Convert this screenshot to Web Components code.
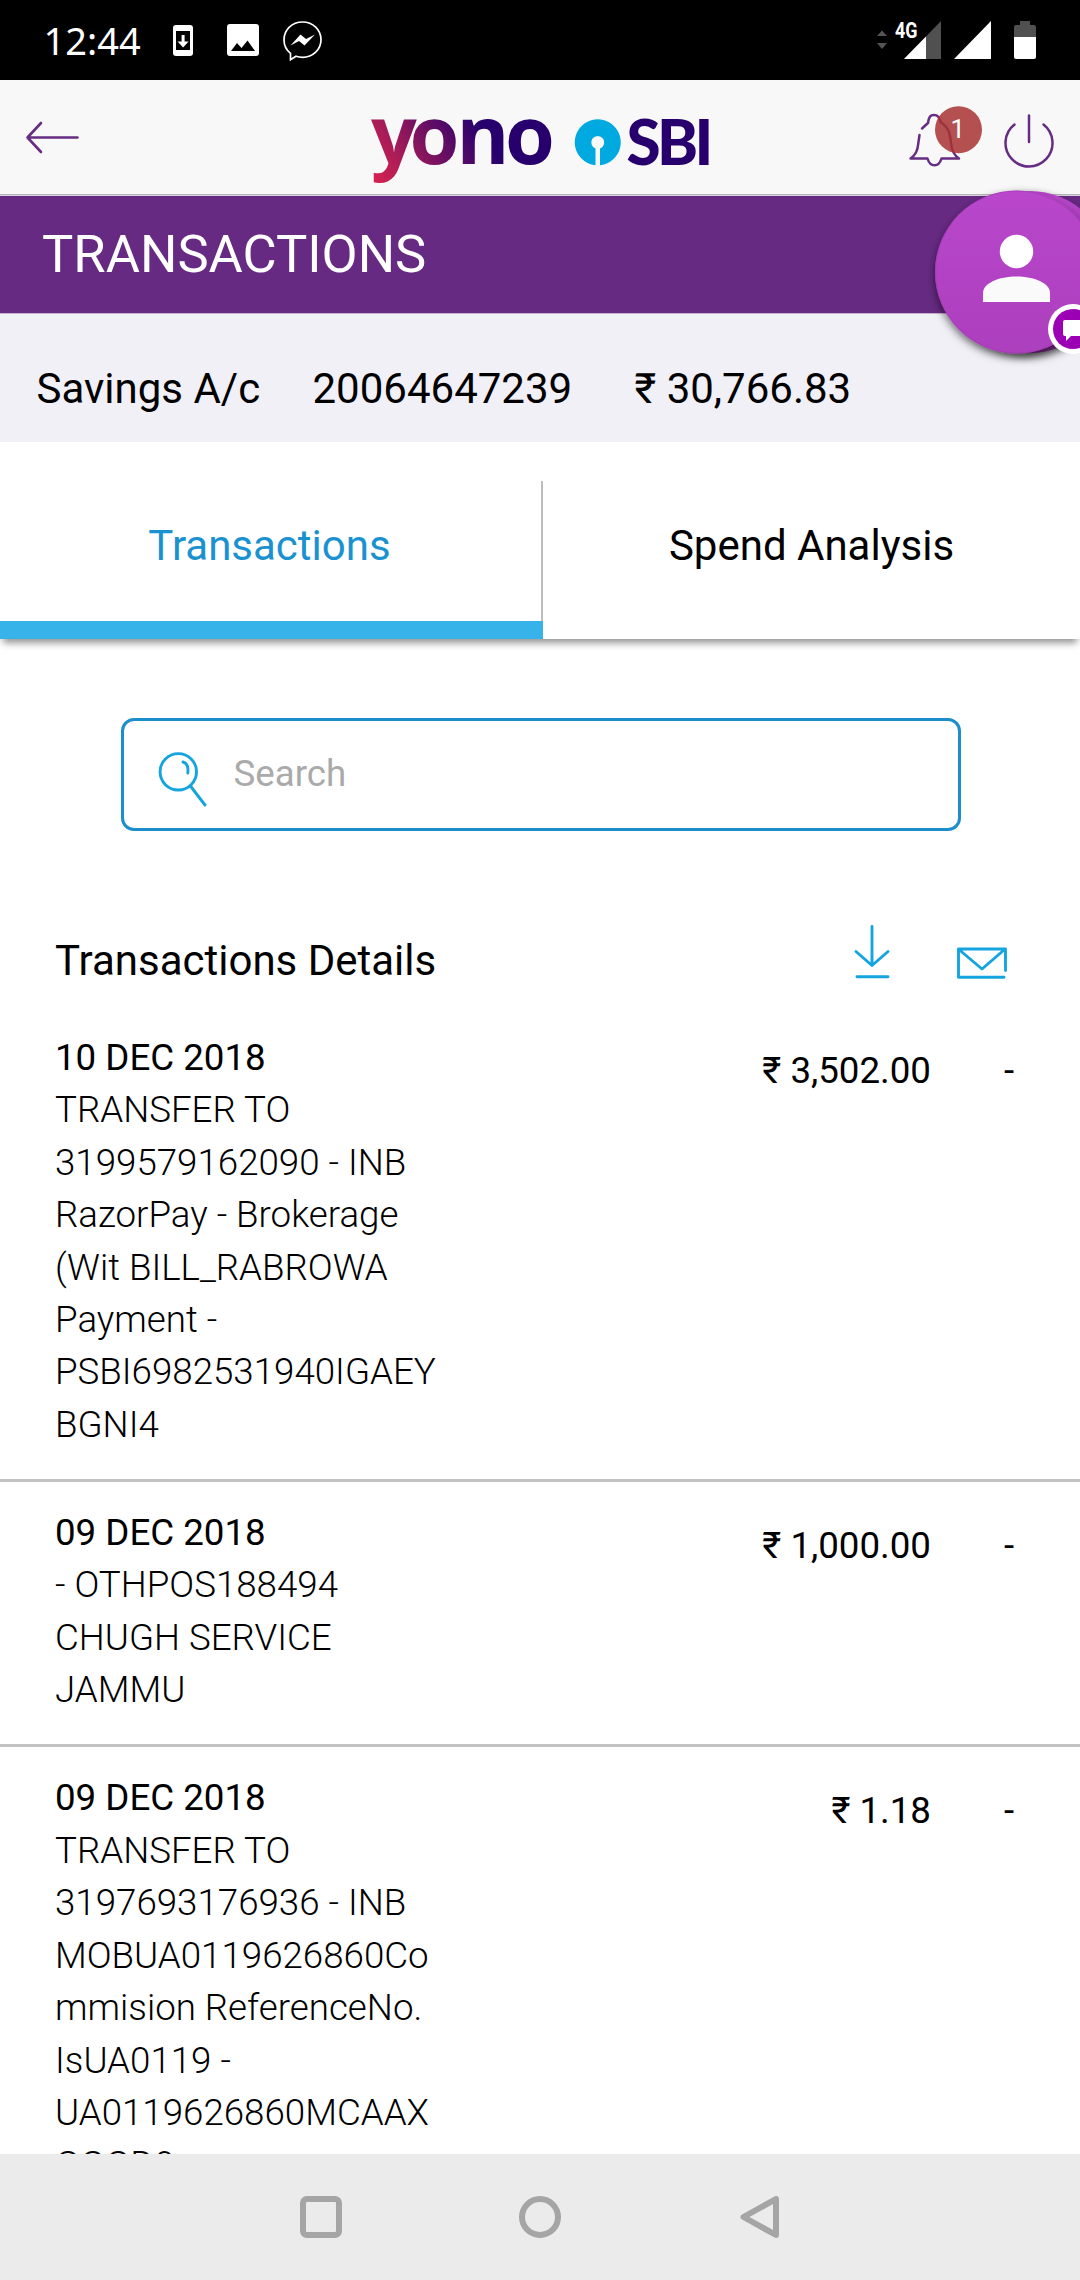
<!DOCTYPE html>
<html lang="en">
<head>
<meta charset="utf-8">
<title>Transactions</title>
<style>
html,body{margin:0;padding:0}
body{width:1080px;height:2280px;overflow:hidden;background:#fff;font-family:Roboto,"Noto Sans",sans-serif;color:#000}
</style>
</head>
<body>
<yono-app></yono-app>
<script>
const define = (name, html) => {
  const t = document.createElement('template');
  t.innerHTML = html;
  customElements.define(name, class extends HTMLElement {
    constructor() {
      super();
      this.attachShadow({ mode: 'open' }).append(t.content.cloneNode(true));
    }
  });
};

define('status-bar', `
<style>
:host{display:flex;height:80px;background:#000;color:#fff;align-items:flex-start;justify-content:space-between}
.time{font:38px/52px "Noto Sans",sans-serif;margin:14px 0 0 43.500px;width:129.500px;white-space:nowrap}
.left,.right{display:flex}
svg{display:block}
</style>
<div class="left"><span class="time">12:44</span>
<svg width="160" height="80" viewBox="173 0 160 80">
<path fill="#fff" fill-rule="evenodd" d="M176 25h14a3 3 0 0 1 3 3v25a3 3 0 0 1-3 3h-14a3 3 0 0 1-3-3V28a3 3 0 0 1 3-3zM176 31v19h14V31z"/>
<path fill="#fff" d="M181.6 35h3v6.500h4l-5.500 6-5.500-6h4z"/>
<path fill="#fff" fill-rule="evenodd" d="M230 24h26a3 3 0 0 1 3 3v26a3 3 0 0 1-3 3h-26a3 3 0 0 1-3-3V27a3 3 0 0 1 3-3zM231 51h24l-7.500-10.500-6 7.500-4.500-5z"/>
<path fill="none" stroke="#fff" stroke-width="1.700" d="M302.500 22c10.500 0 18.500 8 18.500 17.700s-8 17.700-18.500 17.700c-2.500 0-4.500-.4-6.500-1.100l-5.500 3.500v-6.500c-4.300-3.400-6.500-8.200-6.500-13.600 0-9.700 8-17.700 18.500-17.700z"/>
<path fill="#fff" d="M290.500 45.500l10-11 5.500 4.500 9-4.500-10.500 11-5.500-4.500z"/>
</svg></div>
<svg class="right" width="210" height="80" viewBox="870 0 210 80">
<path fill="#555" d="M877 36l5-5.500 5 5.500zM877 43h10l-5 6z"/>
<path fill="#505050" d="M941 21v38h-37z"/><path fill="#fff" d="M926 36.500V59h-22z"/>
<path fill="#fff" d="M991 21v38h-37z"/>
<path fill="#505050" d="M1020 21h10v4h4a2 2 0 0 1 2 2v10h-22V27a2 2 0 0 1 2-2h4z"/>
<path fill="#fff" d="M1014 37h22v20a2 2 0 0 1-2 2h-18a2 2 0 0 1-2-2z"/>
<text x="895" y="38" font-family="Roboto,sans-serif" font-weight="700" font-size="22" fill="#fff" textLength="22.500" lengthAdjust="spacingAndGlyphs">4G</text>
</svg>`);

define('app-header', `
<style>
:host{display:flex;height:114px;background:#f8f8f8;border-bottom:1px solid #b5b9b5;box-shadow:0 1px 0 #dcd2e2;margin-bottom:1px}
svg{display:block;overflow:visible;flex:none}
.logo{margin-left:240px}
.actions{margin-left:170px}
</style>
<svg width="120" height="114" viewBox="0 80 120 114" fill="none" stroke="#662d82" stroke-width="2.600" stroke-linecap="round" stroke-linejoin="round"><path d="M77.500 137.500H27.500M41 123 27.500 137.500 41 152"/></svg>
<svg class="logo" width="360" height="114" viewBox="360 80 360 114">
<defs><linearGradient id="g" gradientUnits="userSpaceOnUse" x1="372" y1="182" x2="474" y2="118"><stop offset="0" stop-color="#d8234f"/><stop offset=".3" stop-color="#a91c58"/><stop offset=".65" stop-color="#650e64"/><stop offset="1" stop-color="#28006e"/></linearGradient></defs>
<text x="371 409.500 456.500 505" y="164" font-family="Open Sans,sans-serif" font-weight="700" font-size="80.500" fill="url(#g)">yono</text>
<path fill="#00a9e0" d="M595.500 165.200A23 23 0 1 1 600 165.200V148.500A6.500 6.500 0 1 0 595.500 148.500z"/>
<text x="626.500 657 694.500" y="164.500" font-family="Lato,sans-serif" font-weight="900" font-size="62" fill="#28006e">SBI</text>
</svg>
<svg class="actions" width="190" height="114" viewBox="890 80 190 114" fill="none" stroke="#662d82" stroke-width="2.500" stroke-linecap="round" stroke-linejoin="round">
<path d="M922 128.500 928 123C929 117 930 115 934 115S939 117 941 122.500C949 128 950 133 951 143Q952 154 959 158.500H941.500C940 163.500 938 165.300 934.500 165.300S929 163.500 927.500 158.500H910.500Q917.500 154 918.200 144L919.500 135"/>
<circle cx="958.500" cy="129.700" r="23.500" fill="#a93234" fill-opacity=".85" stroke="none"/>
<path d="M1014.500 124.500a23.500 23.500 0 1 0 29 0M1029 115.500V142"/>
<text x="950.500" y="138" font-family="Roboto,sans-serif" font-size="26" fill="#fff" stroke="none">1</text>
</svg>`);

define('title-bar', `
<style>
:host{display:block;height:117px;background:#662a82;border-bottom:1px solid #c6afd1;color:#fff;font-size:52.500px;line-height:60px;box-sizing:content-box}
div{padding:28px 0 0 42px}
</style><div><slot></slot></div>`);

define('account-summary', `
<style>
:host{display:flex;height:128px;background:#f1f0f7;font-size:42px;line-height:50px;white-space:nowrap;box-sizing:border-box;padding:50px 0 0 36.500px}
span{display:block}.a{width:276px}.b{width:322px}
</style><span class="a"><slot name="kind"></slot></span><span class="b"><slot name="number"></slot></span><span><slot name="balance"></slot></span>`);

define('tab-strip', `
<style>
:host{display:flex;height:197px;box-sizing:border-box;padding-top:39px;box-shadow:0 7px 7px -3px rgba(0,0,0,.42)}
</style><slot></slot>`);
define('tab-item', `
<style>
:host{display:flex;flex:1;box-sizing:border-box;font-size:42px;line-height:50px;justify-content:center;padding-top:40px}
:host([active]){flex:0 0 543px;padding-right:4px;color:#1a92d0;background:linear-gradient(#37b3ea,#37b3ea) 0 100%/100% 18px no-repeat,linear-gradient(#bdbdbd,#bdbdbd) 100% 0/2px 100% no-repeat}
</style><span><slot></slot></span>`);

define('search-box', `
<style>
:host{display:flex;box-sizing:border-box;width:840px;height:113px;margin:79px 0 0 121px;border:3px solid #1c8ecb;border-radius:13px;align-items:center;color:#aaa;font-size:36.700px;line-height:44px}
svg{display:block;margin-left:33px;width:76.500px}
span{margin-top:-2px}
</style><svg width="76.500" height="107" viewBox="157 721 76.500 107" fill="none" stroke="#14a4df" stroke-width="2.900" stroke-linecap="round"><circle cx="178.300" cy="771.800" r="18.200"/><path d="M190.800 786.500 205 805M183 762C187 763 188.500 767 187.800 773"/></svg><span><slot></slot></span>`);

define('details-header', `
<style>
:host{display:flex;height:176px;justify-content:space-between;font-size:42px;line-height:50px;padding-left:55px;box-sizing:border-box}
span{padding-top:105px}
svg{display:block}
</style><span><slot></slot></span>
<svg width="240" height="176" viewBox="840 831 240 176" fill="none" stroke="#14a4df" stroke-width="2.900" stroke-linecap="round" stroke-linejoin="round"><path d="M872 926.500V965.500M856 951.500 872 965.500 888 951.500M857 976.800H888M1004 977.300H958.500V949H1005.500V970.500M959.500 950 982 969 1004 950"/></svg>`);

define('transaction-row', `
<style>
:host{display:flex;font-size:36.700px;line-height:52.400px;padding:25px 0 27.800px 55px;border-bottom:3px solid #c3c3c3}
.info{width:390px;overflow-wrap:anywhere;flex:none}
.date{display:block}
.desc{display:block;font-weight:300}
.amount{width:486px;padding-top:13px;text-align:right;white-space:nowrap}
.flag{margin-left:73px;padding-top:13px}
</style><div class="info"><span class="date"><slot name="date"></slot></span><span class="desc"><slot></slot></span></div><div class="amount"><slot name="amount"></slot></div><div class="flag">-</div>`);

define('chat-fab', `
<style>:host{position:absolute;left:915px;top:175px;width:165px;height:205px;overflow:hidden}svg{display:block}</style>
<svg width="165" height="205" viewBox="915 175 165 205">
<defs><linearGradient id="f" x2="0" y2="1"><stop offset="0" stop-color="#b946cb"/><stop offset="1" stop-color="#ac40bd"/></linearGradient>
<linearGradient id="b" x2="0" y2="1"><stop offset="0" stop-color="#b946cb"/><stop offset="1" stop-color="#762c86"/></linearGradient>
<filter id="s" x="-20%" y="-20%" width="140%" height="140%"><feDropShadow dx="0" dy="4" stdDeviation="4" flood-opacity=".55"/></filter></defs>
<circle cx="1030" cy="272" r="81" fill="url(#b)" filter="url(#s)"/>
<circle cx="1016.500" cy="272" r="81.500" fill="url(#f)"/>
<circle cx="1016.500" cy="272" r="81" fill="none" stroke="#9a35ab" stroke-opacity=".45"/>
<circle cx="1016.500" cy="251.500" r="16.700" fill="#fff"/>
<path fill="#fafafa" d="M983 302V293C983 283 999 276.500 1016.500 276.500S1050 283 1050 293V302z"/>
<circle cx="1073" cy="329" r="25" fill="#fff"/><circle cx="1073" cy="329" r="20" fill="#9c00b4"/>
<path fill="#fff" d="M1065 320h20v16h-14l-5 5v-5h-1a2 2 0 0 1-2-2v-12a2 2 0 0 1 2-2z"/>
</svg>`.replace('r="81.500" fill="url(#f)"/>', 'r="81.500" fill="url(#f)" filter="url(#s)"/>'));

define('nav-bar', `
<style>:host{display:flex;flex:none;height:126px;background:#ebebeb;justify-content:center}svg{display:block}</style>
<svg width="1080" height="126" viewBox="0 2154 1080 126" fill="none" stroke="#a5a5a5" stroke-width="6" stroke-linejoin="round"><rect x="303" y="2199" width="36" height="36" rx="4"/><circle cx="540" cy="2217" r="18"/><path d="M743.500 2217 776 2199V2235z"/></svg>`);

define('yono-app', `
<style>
:host{display:flex;flex-direction:column;width:1080px;height:2280px;position:relative;overflow:hidden}
main{flex:1;min-height:0;overflow:hidden}
</style>
<status-bar></status-bar><app-header></app-header>
<main>
<title-bar>TRANSACTIONS</title-bar>
<account-summary><span slot="kind">Savings A/c</span><span slot="number">20064647239</span><span slot="balance">₹ 30,766.83</span></account-summary>
<tab-strip><tab-item active>Transactions</tab-item><tab-item>Spend Analysis</tab-item></tab-strip>
<search-box>Search</search-box>
<details-header>Transactions Details</details-header>
<transaction-row><span slot="date">10 DEC 2018</span>TRANSFER TO 3199579162090 - INB RazorPay - Brokerage (Wit BILL_RABROWA Payment - PSBI6982531940IGAEY<wbr>BGNI4<span slot="amount">₹ 3,502.00</span></transaction-row>
<transaction-row><span slot="date">09 DEC 2018</span>- OTHPOS188494 CHUGH SERVICE JAMMU<span slot="amount">₹ 1,000.00</span></transaction-row>
<transaction-row><span slot="date">09 DEC 2018</span>TRANSFER TO 3197693176936 - INB MOBUA0119626860Co<wbr>mmision ReferenceNo. IsUA0119 - UA0119626860MCAAX<wbr>GGGD0<span slot="amount">₹ 1.18</span></transaction-row>
</main>
<nav-bar></nav-bar>
<chat-fab></chat-fab>`);
</script>
</body>
</html>
